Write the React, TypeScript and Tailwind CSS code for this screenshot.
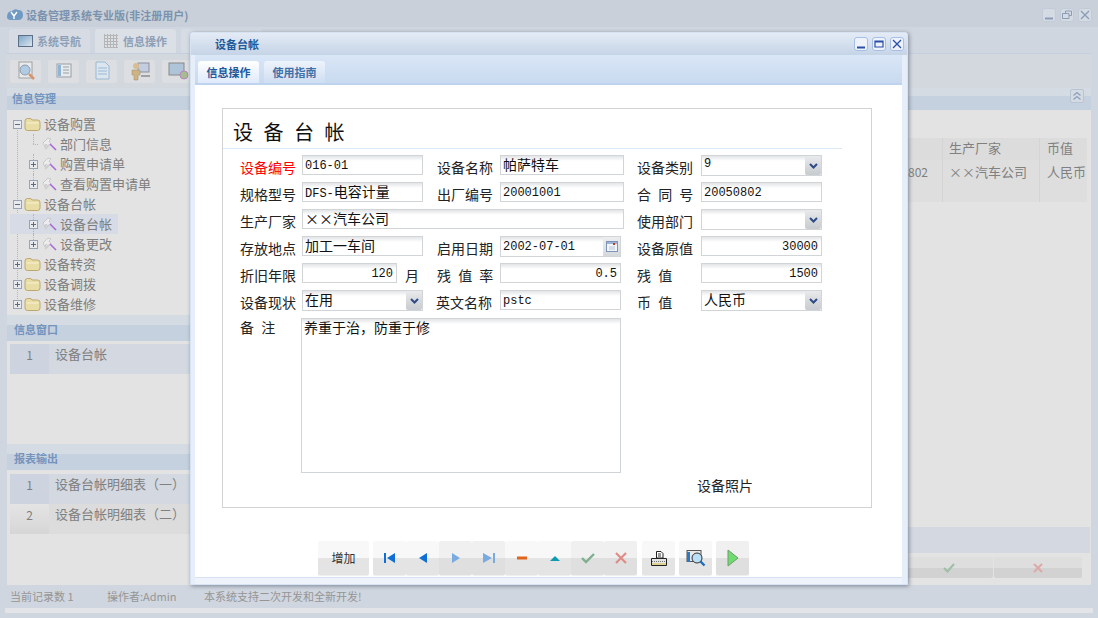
import React from 'react';

const cjk = '[font-family:"Noto_Sans_CJK_SC","Liberation_Sans",sans-serif]';
const mono = 'text-[12px] [font-family:"Liberation_Mono","Noto_Sans_CJK_SC",monospace]';
const monoBox = `${mono} pt-[2px]`;
const zh = 'text-[14px]';

const Folder = () => (
  <svg width="17" height="15" viewBox="0 0 17 15" className="shrink-0">
    <path d="M1 4 Q1 1.5 3.5 1.5 H6 Q7.5 1.5 8 3 H13.5 Q16 3 16 5.5 V11 Q16 13.5 13.5 13.5 H3.5 Q1 13.5 1 11 Z" fill="#e9dda6" stroke="#bca770" />
    <path d="M2.5 6 H14.5" stroke="#f7f1d2" />
  </svg>
);

const Tool = () => (
  <svg width="15" height="15" viewBox="0 0 15 15" className="shrink-0">
    <path d="M1 6 L6 1 L9 2 L7 4 L9 7 L6 9 L4 7 L3 10 Z" fill="#ececec" stroke="#c2c2c2" strokeWidth="0.8" />
    <path d="M3 12 L7 8" stroke="#cfcfcf" strokeWidth="2" />
    <path d="M8 7 L14 13" stroke="#a86ad8" strokeWidth="1.6" />
  </svg>
);

const TreeBox = ({ open }: { open?: boolean }) => (
  <span className="relative z-10 flex h-[9px] w-[9px] shrink-0 items-center justify-center border border-[#98a3b3] bg-[#e8eaee]">
    <span className="absolute h-px w-[5px] bg-[#5f6b7c]" />
    {!open && <span className="absolute h-[5px] w-px bg-[#5f6b7c]" />}
  </span>
);

const treeItems = [
  { label: '设备购置', level: 0, open: true },
  { label: '部门信息', level: 1, leaf: true, line: 'top-0 h-[10px]' },
  { label: '购置申请单', level: 1, line: 'top-0 h-[20px]' },
  { label: '查看购置申请单', level: 1, line: 'top-0 h-[10px]' },
  { label: '设备台帐', level: 0, open: true },
  { label: '设备台帐', level: 1, selected: true, line: 'top-0 h-[20px]' },
  { label: '设备更改', level: 1, line: 'top-0 h-[10px]' },
  { label: '设备转资', level: 0 },
  { label: '设备调拨', level: 0 },
  { label: '设备维修', level: 0 },
];

const SectionHead = ({ title }: { title: string }) => (
  <div className="flex h-[26px] items-end bg-[linear-gradient(#d5dbe3_40%,#c6d1df_40%)] pb-[4px] pl-[7px] text-[11px] font-bold leading-[15px] text-[#7394bd]">
    {title}
  </div>
);

const ListRow = ({ no, text, dim }: { no: number; text: string; dim?: boolean }) => (
  <div className={`flex h-[30px] text-[13px] text-[#808080] ${dim ? 'bg-[#dcdcdc]' : 'bg-[#d3d8e1]'}`}>
    <div className={`w-[39px] pt-[2px] text-center text-[12px] ${dim ? 'bg-[linear-gradient(#e4e4e4,#d6d6d6)]' : 'bg-[#cdd4df]'}`}>{no}</div>
    <div className="pl-[6px]">{text}</div>
  </div>
);

const TopIcon = ({ kind }: { kind: number }) => (
  <svg width="22" height="20" viewBox="0 0 22 20" className="opacity-70">
    {kind === 0 && (
      <>
        <rect x="4" y="1" width="13" height="16" fill="#eef0f2" stroke="#888" />
        <circle cx="10" cy="9" r="5" fill="#9fc4e6" stroke="#6d7f96" />
        <path d="M14 13 L19 18" stroke="#d8743c" strokeWidth="2.5" />
      </>
    )}
    {kind === 1 && (
      <>
        <rect x="4" y="3" width="14" height="13" fill="#eef0f2" stroke="#7b8794" />
        <rect x="5" y="4" width="3" height="11" fill="#6fa3cf" />
        <path d="M10 6 H16 M10 9 H16 M10 12 H16" stroke="#7b8794" />
      </>
    )}
    {kind === 2 && (
      <>
        <path d="M5 1 H14 L18 5 V18 H5 Z" fill="#dceaf6" stroke="#7fa8cc" />
        <path d="M7 7 H16 M7 10 H16 M7 13 H16" stroke="#7fa8cc" />
      </>
    )}
    {kind === 3 && (
      <>
        <rect x="9" y="2" width="11" height="9" fill="#b9c6e0" stroke="#6a7385" />
        <circle cx="7" cy="5" r="3" fill="#d9b06e" />
        <path d="M3 9 H11 V14 H9 V19 H5 V14 H3 Z" fill="#c9a25c" stroke="#8a6f3d" strokeWidth="0.5" />
        <path d="M12 15 H21" stroke="#888" strokeWidth="2" />
      </>
    )}
    {kind === 4 && (
      <>
        <rect x="2" y="2" width="15" height="12" fill="#9db9d6" stroke="#666" />
        <circle cx="17" cy="14" r="4" fill="#90b070" stroke="#b060b0" />
      </>
    )}
  </svg>
);

const WinBtn = ({ kind, active }: { kind: 'min' | 'max' | 'restore' | 'close'; active?: boolean }) => {
  const c = active ? '#2a4fa8' : '#8a9cb8';
  return (
    <div className={`flex h-[14px] w-[14px] items-center justify-center rounded-[3px] border ${active ? 'border-[#a5bfe6] bg-[#eef3fb]' : 'border-[#c2ccd9] bg-[#d5dbe3]'}`}>
      <svg width="10" height="10" viewBox="0 0 10 10" fill="none" stroke={c}>
        {kind === 'min' && <path d="M1 8.5 H9" strokeWidth="2" />}
        {kind === 'max' && <path d="M1 2 H9 V8 H1 Z M1 3 H9" strokeWidth="1.2" />}
        {kind === 'restore' && <path d="M3.5 3 V1 H9.5 V5.5 H7 M0.5 3.5 H7 V8.5 H0.5 Z" />}
        {kind === 'close' && <path d="M1 1 L9 9 M9 1 L1 9" strokeWidth="1.3" />}
      </svg>
    </div>
  );
};

const Label = ({ w, red, children }: { w: string; red?: boolean; children: React.ReactNode }) => (
  <div className={`${w} shrink-0 whitespace-pre pt-[2px] text-[14px] leading-[20px] [word-spacing:4px] ${red ? 'text-[#ff0000]' : 'text-[#222]'}`}>{children}</div>
);

const boxBase = 'shrink-0 overflow-hidden border border-[#d2d5d8] bg-[linear-gradient(#e2e4e6,#ffffff_5px)] leading-[17px] text-[#111]';

const Chevron = () => (
  <div className="absolute bottom-0 right-0 top-0 flex w-[16px] items-center justify-center rounded-[2px] bg-linear-to-b from-[#e8eaec] to-[#c8cbcf]">
    <svg width="9" height="6" viewBox="0 0 9 6" fill="none">
      <path d="M1 1 L4.5 4.5 L8 1" stroke="#2d4a86" strokeWidth="2" />
    </svg>
  </div>
);

const Select = ({ text, font }: { text: string; font: string }) => (
  <div className={`${boxBase} ${font} relative h-[21px] w-[121px] pl-[2px]`}>
    {text}
    <Chevron />
  </div>
);

const ToolBtn = ({ w, muted, children }: { w: string; muted?: boolean; children: React.ReactNode }) => (
  <div className={`flex h-[35px] ${w} items-center justify-center rounded-[2px] border-b border-[#efefef] ${muted ? 'bg-[linear-gradient(#f0f0f0_50%,#dfdfdf_50%)]' : 'bg-[linear-gradient(#f8f8f8_50%,#e4e4e4_50%)]'}`}>
    {children}
  </div>
);

const Nav = ({ d, fill, stroke, sw }: { d: string; fill?: string; stroke?: string; sw?: number }) => (
  <svg width="16" height="14" viewBox="0 0 16 14">
    <path d={d} fill={fill ?? 'none'} stroke={stroke} strokeWidth={sw} />
  </svg>
);

export default function App() {
  return (
    <div className={`relative flex h-[618px] w-[1098px] flex-col overflow-hidden bg-[#d0d6df] ${cjk}`}>
      {/* main window, dimmed behind the dialog */}
      <div className="flex h-[27px] shrink-0 items-center bg-[#c9d0d9] pl-[6px] pr-[6px] pt-[3px]">
        <svg width="18" height="14" viewBox="0 0 18 14">
          <path d="M1 9 Q1 3 6 3 Q9 0 12 2 Q17 2 17 7 Q17 12 12 12 H5 Q1 12 1 9 Z" fill="#6f9ac4" />
          <path d="M5 4 L8 8 L11 4 M8 8 V11" stroke="#fff" strokeWidth="1.4" fill="none" />
        </svg>
        <span className="ml-[2px] flex-1 text-[11px] font-bold text-[#7b92ae]">设备管理系统专业版(非注册用户)</span>
        <div className="flex gap-[4px]">
          <WinBtn kind="min" />
          <WinBtn kind="restore" />
          <WinBtn kind="close" />
        </div>
      </div>

      <div className="mx-[6px] flex h-[27px] shrink-0 items-end gap-[5px] border-b border-[#c5cfdd] bg-[#d0d6df] pl-[3px]">
        <div className="flex h-[24px] w-[81px] items-center gap-[4px] rounded-t-[3px] bg-[#d7dce4] pl-[9px] text-[11px] font-bold text-[#8da0b8]">
          <span className="h-[12px] w-[15px] border border-[#5c6f86] bg-linear-to-br from-[#7fa7c8] to-[#dbe6ee]" />
          系统导航
        </div>
        <div className="flex h-[24px] w-[81px] items-center gap-[5px] rounded-t-[3px] bg-[#dbdfe6] pl-[9px] text-[11px] font-bold text-[#8da0b8]">
          <span className="h-[14px] w-[14px] bg-[repeating-linear-gradient(0deg,#b5b5b5_0_1px,transparent_1px_3px),repeating-linear-gradient(90deg,#b5b5b5_0_1px,transparent_1px_3px)]" />
          信息操作
        </div>
        <div className="h-[24px] w-[81px] rounded-t-[3px] bg-[#d7dce4]" />
      </div>

      <div className="mx-[6px] flex h-[34px] shrink-0 items-center gap-[7px] bg-[#d3d8df] pl-[4px]">
        {[0, 1, 2, 3, 4].map((k) => (
          <div key={k} className="flex h-[23px] w-[31px] items-center justify-center rounded-[2px] bg-[#dcdee1]">
            <TopIcon kind={k} />
          </div>
        ))}
      </div>

      <div className="mx-[7px] flex h-[22px] shrink-0 items-end justify-between bg-[linear-gradient(#d5dbe3_36%,#c6d1df_36%)] pb-[4px] pl-[5px] pr-[7px]">
        <span className="text-[11px] font-bold leading-[15px] text-[#7394bd]">信息管理</span>
        <div className="mb-[3px] flex h-[14px] w-[14px] items-center justify-center rounded-[2px] border border-[#b8c4d4] bg-[#d5dbe3]">
          <svg width="10" height="10" viewBox="0 0 10 10" fill="none" stroke="#8ba0bd" strokeWidth="1.3">
            <path d="M1.5 4.5 L5 1.5 L8.5 4.5 M1.5 8.5 L5 5.5 L8.5 8.5" />
          </svg>
        </div>
      </div>

      <div className="mx-[7px] flex h-[475px] shrink-0 bg-[#e3e3e3]">
        <div className="flex w-[190px] shrink-0 flex-col">
          <div className="relative h-[205px] shrink-0 pl-[6px] pt-[4px] text-[13px] text-[#7d7d7d]">
            <div className="absolute bottom-[14px] left-[10px] top-[18px] border-l border-dotted border-[#b5b5b5]" />
            {treeItems.map((item, i) => (
              <div
                key={i}
                className={`relative flex h-[20px] items-center ${item.level ? 'pl-[16px]' : ''} ${item.selected ? 'ml-[-3px] w-[108px] pl-[19px] bg-[#d6dbe5]' : ''}`}
              >
                {item.level === 0 ? (
                  <>
                    <TreeBox open={item.open} />
                    <span className="ml-[2px]"><Folder /></span>
                    <span className="ml-[3px]">{item.label}</span>
                  </>
                ) : (
                  <>
                    <span className={`absolute border-l border-dotted border-[#b5b5b5] ${item.selected ? 'left-[23px]' : 'left-[20px]'} ${item.line}`} />
                    {item.leaf ? <span className="ml-[4px] w-[5px] border-t border-dotted border-[#b5b5b5]" /> : <TreeBox />}
                    <span className="ml-[4px]"><Tool /></span>
                    <span className="ml-[3px]">{item.label}</span>
                  </>
                )}
              </div>
            ))}
          </div>
          <SectionHead title="信息窗口" />
          <div className="mx-[3px] mt-[3px]">
            <ListRow no={1} text="设备台帐" />
          </div>
          <div className="h-[70px]" />
          <SectionHead title="报表输出" />
          <div className="mx-[3px] mt-[4px]">
            <ListRow no={1} text="设备台帐明细表（一）" />
            <ListRow no={2} text="设备台帐明细表（二）" dim />
          </div>
        </div>

        <div className="flex min-w-0 flex-1 flex-col">
          <div className="flex h-[28px] shrink-0" />
          <div className="flex justify-end pr-[4px] text-[13px] text-[#808080]">
            <div className="w-[40px]">
              <div className="h-[22px] border-r border-[#d4d4d4] bg-[#dcdcdc]" />
              <div className="h-[21px] border-r border-[#d4d4d4] bg-[#dedede] pl-[5px] pt-[3px] text-[12px]">802</div>
              <div className="h-[21px] border-r border-[#d4d4d4] bg-[#dedede]" />
            </div>
            <div className="w-[97px]">
              <div className="h-[22px] border-r border-[#d4d4d4] bg-[#dcdcdc] pl-[6px]">生产厂家</div>
              <div className="h-[21px] border-r border-[#d4d4d4] bg-[#dedede] pl-[6px] pt-[2px]">××汽车公司</div>
              <div className="h-[21px] border-r border-[#d4d4d4] bg-[#dedede]" />
            </div>
            <div className="w-[47px]">
              <div className="h-[22px] bg-[#dcdcdc] pl-[7px]">币值</div>
              <div className="h-[21px] bg-[#dedede] pl-[7px] pt-[2px]">人民币</div>
              <div className="h-[21px] bg-[#dedede]" />
            </div>
          </div>
          <div className="flex-1" />
          <div className="mr-[1px] h-[26px] shrink-0 bg-[#d3d8e1]" />
          <div className="mb-[7px] mt-[4px] flex h-[21px] shrink-0 justify-end gap-[1px] pr-[9px]">
            <div className="flex w-[88px] items-center justify-center rounded-[2px] bg-[linear-gradient(#dedede_50%,#d2d2d2_50%)]">
              <svg width="12" height="10" viewBox="0 0 12 10" fill="none"><path d="M1 5 L4.5 8.5 L11 1" stroke="#9dbfa6" strokeWidth="2" /></svg>
            </div>
            <div className="flex w-[88px] items-center justify-center rounded-[2px] bg-[linear-gradient(#dedede_50%,#d2d2d2_50%)]">
              <svg width="10" height="10" viewBox="0 0 10 10" fill="none"><path d="M1 1 L9 9 M9 1 L1 9" stroke="#dba9a6" strokeWidth="2" /></svg>
            </div>
          </div>
        </div>
      </div>

      <div className="mx-[7px] flex h-[23px] shrink-0 items-center bg-[#d0d6df] pl-[3px] text-[11px] text-[#959595]">
        <span className="w-[97px]">当前记录数 1</span>
        <span className="w-[97px]">操作者:Admin</span>
        <span>本系统支持二次开发和全新开发!</span>
      </div>
      <div className="mx-[5px] h-[5px] shrink-0 bg-[#e2e4e8]" />

      {/* dialog on top */}
      <div className="absolute left-[190px] top-[32px] flex h-[553px] w-[718px] flex-col rounded-t-[3px] border border-[#d7e2f2] bg-[#e6eef9] shadow-[1px_1px_4px_rgba(90,100,120,0.7)]">
        <div className="flex h-[22px] shrink-0 items-center justify-between bg-linear-to-b from-[#e4ebf6] to-[#c5d4e6] pl-[24px] pr-[3px]">
          <span className="text-[11px] font-bold text-[#215a9a]">设备台帐</span>
          <div className="flex gap-[4px]">
            <WinBtn kind="min" active />
            <WinBtn kind="max" active />
            <WinBtn kind="close" active />
          </div>
        </div>
        <div className="ml-[4px] mr-[5px] flex h-[30px] shrink-0 items-end gap-[5px] border-b-2 border-[#bdd3ee] bg-linear-to-b from-[#d9e6f6] to-[#c9daf0] pl-[3px]">
          <div className="flex h-[22px] w-[61px] items-center justify-center rounded-t-[3px] bg-linear-to-b from-white to-[#dfeafa] text-[11px] font-bold text-[#215a9a]">信息操作</div>
          <div className="flex h-[22px] w-[61px] items-center justify-center rounded-t-[3px] bg-linear-to-b from-[#eef3fb] to-[#cfdef2] text-[11px] font-bold text-[#3f70a8]">使用指南</div>
        </div>

        <div className="ml-[4px] mr-[5px] flex flex-1 flex-col items-start bg-white pl-[27px] pt-[23px]">
          <div className="flex h-[400px] w-[650px] shrink-0 flex-col border border-[#d2d2d2] pl-[17px]">
            <div className="ml-[-17px] mr-[29px] h-[40px] shrink-0 border-b border-[#dbe8f8] pl-[10px] pt-[9px] text-[20px] leading-[28px] text-[#111] [word-spacing:6px]">
              设 备 台 帐
            </div>
            <div className="flex flex-col pt-[6px]">
              <div className="flex h-[27px]">
                <Label w="w-[62px]" red>设备编号</Label>
                <div className={`${boxBase} ${monoBox} h-[20px] w-[121px] pl-[2px]`}>016-01</div>
                <div className="w-[14px] shrink-0" />
                <Label w="w-[63px]">设备名称</Label>
                <div className={`${boxBase} ${zh} h-[20px] w-[124px] pl-[2px]`}>帕萨特车</div>
                <div className="w-[13px] shrink-0" />
                <Label w="w-[64px]">设备类别</Label>
                <Select font={mono} text="9" />
              </div>
              <div className="flex h-[27px]">
                <Label w="w-[62px]">规格型号</Label>
                <div className={`${boxBase} ${zh} h-[20px] w-[121px] pl-[2px]`}><span className={mono}>DFS-</span>电容计量</div>
                <div className="w-[14px] shrink-0" />
                <Label w="w-[63px]">出厂编号</Label>
                <div className={`${boxBase} ${monoBox} h-[20px] w-[124px] pl-[2px]`}>20001001</div>
                <div className="w-[13px] shrink-0" />
                <Label w="w-[64px]">合 同 号</Label>
                <div className={`${boxBase} ${monoBox} h-[20px] w-[121px] pl-[2px]`}>20050802</div>
              </div>
              <div className="flex h-[27px]">
                <Label w="w-[62px]">生产厂家</Label>
                <div className={`${boxBase} ${zh} h-[20px] w-[322px] pl-[2px]`}>××汽车公司</div>
                <div className="w-[13px] shrink-0" />
                <Label w="w-[64px]">使用部门</Label>
                <Select font={zh} text="" />
              </div>
              <div className="flex h-[27px]">
                <Label w="w-[62px]">存放地点</Label>
                <div className={`${boxBase} ${zh} h-[20px] w-[121px] pl-[2px]`}>加工一车间</div>
                <div className="w-[14px] shrink-0" />
                <Label w="w-[63px]">启用日期</Label>
                <div className={`${boxBase} ${monoBox} relative h-[21px] w-[121px] pl-[2px]`}>
                  2002-07-01
                  <div className="absolute bottom-0 right-0 top-0 flex w-[17px] items-center justify-center bg-linear-to-b from-[#eceef0] to-[#d6d9dc]">
                    <svg width="12" height="11" viewBox="0 0 12 11">
                      <rect x="0.5" y="0.5" width="11" height="10" fill="#f2f5fa" stroke="#7d94b8" />
                      <rect x="1" y="1" width="10" height="2" fill="#9db4d4" />
                      <rect x="7" y="2" width="2" height="2" fill="#c0392b" />
                      <path d="M3 6 H9 M3 8 H9" stroke="#b7c4d8" />
                    </svg>
                  </div>
                </div>
                <div className="w-[16px] shrink-0" />
                <Label w="w-[64px]">设备原值</Label>
                <div className={`${boxBase} ${monoBox} h-[20px] w-[121px] pr-[3px] text-right`}>30000</div>
              </div>
              <div className="flex h-[27px]">
                <Label w="w-[62px]">折旧年限</Label>
                <div className="flex w-[121px] shrink-0">
                  <div className={`${boxBase} ${monoBox} h-[20px] w-[95px] pr-[3px] text-right`}>120</div>
                  <Label w="ml-[8px]">月</Label>
                </div>
                <div className="w-[14px] shrink-0" />
                <Label w="w-[63px]">残 值 率</Label>
                <div className={`${boxBase} ${monoBox} h-[20px] w-[121px] pr-[3px] text-right`}>0.5</div>
                <div className="w-[16px] shrink-0" />
                <Label w="w-[64px]">残 值</Label>
                <div className={`${boxBase} ${monoBox} h-[20px] w-[121px] pr-[3px] text-right`}>1500</div>
              </div>
              <div className="flex h-[28px]">
                <Label w="w-[62px]">设备现状</Label>
                <Select font={zh} text="在用" />
                <div className="w-[13px] shrink-0" />
                <Label w="w-[64px]">英文名称</Label>
                <div className={`${boxBase} ${monoBox} h-[20px] w-[121px] pl-[2px]`}>pstc</div>
                <div className="w-[16px] shrink-0" />
                <Label w="w-[64px]">币 值</Label>
                <Select font={zh} text="人民币" />
              </div>
              <div className="flex h-[176px]">
                <Label w="mt-[-3px] w-[61px]">备 注</Label>
                <div className={`${boxBase} ${zh} h-[155px] w-[320px] pl-[2px]`}>养重于治，防重于修</div>
                <div className="ml-[76px] flex items-end text-[14px] leading-[17px] text-[#222]">设备照片</div>
              </div>
            </div>
          </div>

          <div className="ml-[96px] mt-[33px] flex items-start">
            <ToolBtn w="w-[51px]"><span className="text-[12px] text-[#333]">增加</span></ToolBtn>
            <div className="ml-[4px] flex">
              <ToolBtn w="w-[33px]"><Nav d="M2 2 H4 V12 H2 Z M13 2 V12 L5 7 Z" fill="#0f6fd6" /></ToolBtn>
              <ToolBtn w="w-[33px]"><Nav d="M12 2 V12 L4 7 Z" fill="#0f6fd6" /></ToolBtn>
              <ToolBtn w="w-[33px]" muted><Nav d="M4 2 V12 L12 7 Z" fill="#79abe0" /></ToolBtn>
              <ToolBtn w="w-[33px]" muted><Nav d="M2 2 V12 L11 7 Z M12 2 H14 V12 H12 Z" fill="#79abe0" /></ToolBtn>
              <ToolBtn w="w-[33px]"><Nav d="M3 5.5 H13 V8.5 H3 Z" fill="#e2641c" /></ToolBtn>
              <ToolBtn w="w-[33px]"><Nav d="M3 10 L8 5 L13 10 Z" fill="#0d9bb0" /></ToolBtn>
              <ToolBtn w="w-[33px]" muted><Nav d="M2 7 L6 11 L14 3" stroke="#7fb08f" sw={2.4} /></ToolBtn>
              <ToolBtn w="w-[33px]" muted><Nav d="M3 2 L13 12 M13 2 L3 12" stroke="#e08c86" sw={2.2} /></ToolBtn>
            </div>
            <div className="ml-[5px]">
              <ToolBtn w="w-[33px]">
                <svg width="18" height="17" viewBox="0 0 18 17">
                  <path d="M6.5 1.5 H11 L13 3.5 V8 H6.5 Z" fill="#fff" stroke="#222" />
                  <path d="M8 4 H11 M8 6 H11" stroke="#333" />
                  <path d="M1.5 8.5 H16.5 V15.5 H1.5 Z" fill="#e4e4e4" stroke="#222" />
                  <path d="M2 11.5 H16" stroke="#777" strokeDasharray="1 1" />
                  <path d="M2 14 H16" stroke="#d8c040" />
                </svg>
              </ToolBtn>
            </div>
            <div className="ml-[4px]">
              <ToolBtn w="w-[33px]">
                <svg width="20" height="18" viewBox="0 0 20 18">
                  <rect x="1" y="1.5" width="14" height="11" fill="#e8e8e8" stroke="#555" />
                  <rect x="1" y="3" width="3" height="10" fill="#2a78c8" />
                  <circle cx="11" cy="9" r="5" fill="#b8e0f8" stroke="#333" />
                  <path d="M14.5 12.5 L18.5 16.5" stroke="#1c6fc0" strokeWidth="2.4" />
                </svg>
              </ToolBtn>
            </div>
            <div className="ml-[4px]">
              <ToolBtn w="w-[33px]" muted>
                <svg width="14" height="18" viewBox="0 0 14 18"><path d="M2 1 L12 9 L2 17 Z" fill="#6fdc6f" stroke="#6d9d6d" /></svg>
              </ToolBtn>
            </div>
          </div>
        </div>
        <div className="ml-[4px] mr-[5px] h-[7px] shrink-0 border-t border-[#d6e3f5] bg-[#eef3fb]" />
      </div>
    </div>
  );
}
